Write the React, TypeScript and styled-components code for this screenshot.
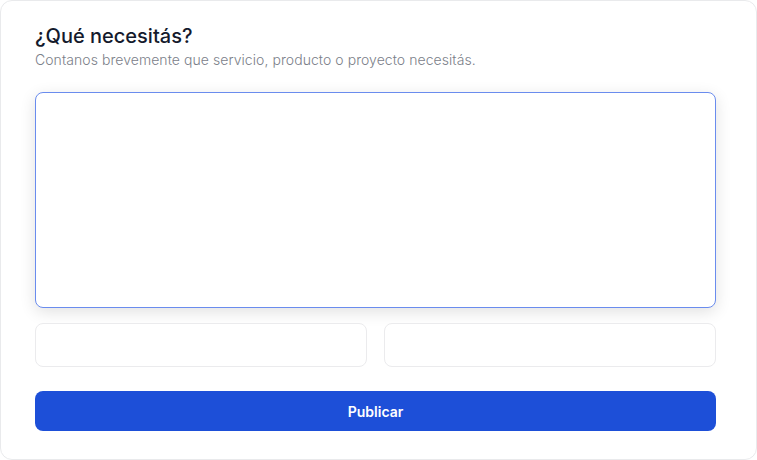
import React from 'react';
import styled, { createGlobalStyle } from 'styled-components';

const GlobalStyle = createGlobalStyle`
    body {
        margin: 0;
        background: #ffffff;
        font-family: Inter, "Noto Sans", sans-serif;
    }
    * { box-sizing: border-box; }
`;

export default function App() {
    return (
        <>
            <GlobalStyle />
            <Card>
                <Title>¿Qué necesitás?</Title>
                <Subtitle>Contanos brevemente que servicio, producto o proyecto necesitás.</Subtitle>
                <Description />
                <FieldRow>
                    <Field />
                    <Field />
                </FieldRow>
                <SubmitButton type='button'>Publicar</SubmitButton>
            </Card>
        </>
    );
}

const Card = styled.form`
    width: 757px;
    height: 460px;
    display: flex;
    flex-direction: column;
    padding: 21px 40px 27px 34px;
    border: 1px solid #e9eaec;
    border-radius: 12px;
    background: #ffffff;
`;

const Title = styled.h2`
    margin: 0;
    font-size: 20px;
    font-weight: 500;
    line-height: 28px;
    color: #141a2c;
`;

const Subtitle = styled.p`
    margin: 0;
    font-size: 14px;
    font-weight: 300;
    line-height: 20px;
    letter-spacing: 0.06px;
    color: #7b8089;
`;

const Description = styled.textarea`
    margin-top: 22px;
    height: 216px;
    width: 100%;
    resize: none;
    border: 1px solid #6a8cee;
    border-radius: 8px;
    box-shadow: 0 4px 16px rgba(0, 0, 0, 0.12);
    outline: none;
    font-family: inherit;
`;

const FieldRow = styled.div`
    margin-top: 15px;
    display: grid;
    grid-template-columns: 1fr 1fr;
    gap: 17px;
`;

const Field = styled.input`
    height: 44px;
    width: 100%;
    border: 1px solid #ebebed;
    border-radius: 8px;
    outline: none;
    font-family: inherit;
`;

const SubmitButton = styled.button`
    margin-top: 24px;
    height: 40px;
    width: 100%;
    border: none;
    border-radius: 8px;
    background: #1d4fd8;
    color: #ffffff;
    font-family: inherit;
    font-size: 14px;
    font-weight: 600;
    cursor: pointer;
`;
